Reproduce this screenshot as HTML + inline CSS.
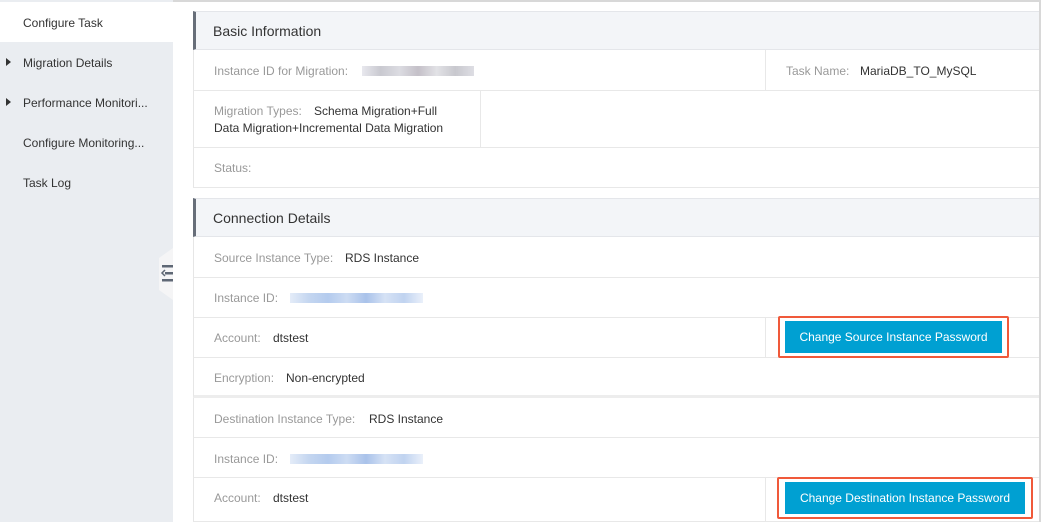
<!DOCTYPE html>
<html><head><meta charset="utf-8"><style>
body{margin:0;width:1041px;height:522px;overflow:hidden;background:#fff;font-family:"Liberation Sans",sans-serif;font-size:12px;position:relative}
.a{position:absolute}
.side{left:0;top:0;width:173px;height:522px;background:#eaedf1}
.si{position:absolute;left:23px;font-size:12px;color:#333}
.tri{position:absolute;left:6px;width:0;height:0;border-left:5px solid #333;border-top:4px solid transparent;border-bottom:4px solid transparent}
.hdr{left:193px;width:846px;height:39px;background:#f3f5f8;border-left:3px solid #676e79;box-sizing:border-box;border-bottom:1px solid #e4e6ea;border-top:1px solid #e4e6ea}
.hdr span{position:absolute;left:17px;top:11px;font-size:14px;color:#333}
.row{left:193px;width:846px;border-left:1px solid #e6e6e6;border-bottom:1px solid #e8e8e8;box-sizing:border-box}
.lb{position:absolute;color:#999}
.v{position:absolute;color:#333}
.vd{position:absolute;top:0;bottom:0;width:1px;background:#e8e8e8}
.blur{position:absolute;height:10px;background:linear-gradient(90deg,#e8e8ee,#c9c9d0,#dcdce2,#c4c0c8,#e2e2e6,#c8c8ce,#dedee4)}
.bb{position:absolute;height:10px;background:linear-gradient(90deg,#e4ecf8,#c4d6f0,#b4cbee,#cddcf3,#a9c2ea,#d6e2f5,#c0d3f0,#eaf0fa)}
.red{position:absolute;border:2px solid #f0593a;border-radius:2px;box-sizing:border-box}
.btn{position:absolute;background:#00a0d2;color:#fff;text-align:center;font-size:12px;line-height:32px}
</style></head><body>
<div class="a" style="left:0;top:0;width:1041px;height:2px;background:#d8d8d8"></div>
<div class="a" style="right:0;top:0;width:2px;height:522px;background:#d8d8d8"></div>
<div class="a side"></div>
<div class="a" style="left:0;top:2px;width:173px;height:40px;background:#fff"></div>
<div class="si" style="top:16px">Configure Task</div>
<div class="tri" style="top:58px"></div><div class="si" style="top:56px">Migration Details</div>
<div class="tri" style="top:98px"></div><div class="si" style="top:96px">Performance Monitori...</div>
<div class="si" style="top:136px">Configure Monitoring...</div>
<div class="si" style="top:176px">Task Log</div>
<svg class="a" style="left:159px;top:248px" width="15" height="52"><polygon points="0,10 14,0 14,52 0,42" fill="#f5f5f6"/><rect x="3" y="17" width="11" height="2.5" fill="#5f6875"/><rect x="6" y="24" width="8" height="2.5" fill="#5f6875"/><rect x="3" y="31" width="11" height="2.5" fill="#5f6875"/><path d="M6 22 L3 25 L6 28" stroke="#5f6875" fill="none" stroke-width="1.5"/></svg>

<div class="a hdr" style="top:11px"><span>Basic Information</span></div>
<div class="a row" style="top:50px;height:41px"><div class="lb" style="left:20px;top:14px">Instance ID for Migration:</div><div class="blur" style="left:168px;top:16px;width:112px"></div><div class="vd" style="left:571px"></div><div class="lb" style="left:592px;top:14px">Task Name:</div><div class="v" style="left:666px;top:14px">MariaDB_TO_MySQL</div></div>
<div class="a row" style="top:91px;height:57px"><div class="lb" style="left:20px;top:13px">Migration Types:</div><div class="v" style="left:120px;top:13px">Schema Migration+Full</div><div class="v" style="left:20px;top:30px">Data Migration+Incremental Data Migration</div><div class="vd" style="left:286px"></div></div>
<div class="a row" style="top:148px;height:40px"><div class="lb" style="left:20px;top:13px">Status:</div></div>

<div class="a hdr" style="top:198px"><span>Connection Details</span></div>
<div class="a row" style="top:237px;height:41px"><div class="lb" style="left:20px;top:14px">Source Instance Type:</div><div class="v" style="left:151px;top:14px">RDS Instance</div></div>
<div class="a row" style="top:278px;height:40px"><div class="lb" style="left:20px;top:13px">Instance ID:</div><div class="bb" style="left:96px;top:15px;width:133px"></div></div>
<div class="a row" style="top:318px;height:40px"><div class="lb" style="left:20px;top:13px">Account:</div><div class="v" style="left:79px;top:13px">dtstest</div><div class="vd" style="left:571px"></div></div>
<div class="a row" style="top:358px;height:40px;border-bottom:3px solid #ededed"><div class="lb" style="left:20px;top:13px">Encryption:</div><div class="v" style="left:92px;top:13px">Non-encrypted</div></div>
<div class="a row" style="top:398px;height:40px"><div class="lb" style="left:20px;top:14px">Destination Instance Type:</div><div class="v" style="left:175px;top:14px">RDS Instance</div></div>
<div class="a row" style="top:438px;height:40px"><div class="lb" style="left:20px;top:14px">Instance ID:</div><div class="bb" style="left:96px;top:16px;width:133px"></div></div>
<div class="a row" style="top:478px;height:44px"><div class="lb" style="left:20px;top:13px">Account:</div><div class="v" style="left:79px;top:13px">dtstest</div><div class="vd" style="left:571px"></div></div>

<div class="red" style="left:778px;top:316px;width:231px;height:42px"></div>
<div class="btn" style="left:785px;top:321px;width:217px;height:32px">Change Source Instance Password</div>
<div class="red" style="left:777px;top:477px;width:256px;height:42px"></div>
<div class="btn" style="left:785px;top:482px;width:240px;height:32px">Change Destination Instance Password</div>
</body></html>
